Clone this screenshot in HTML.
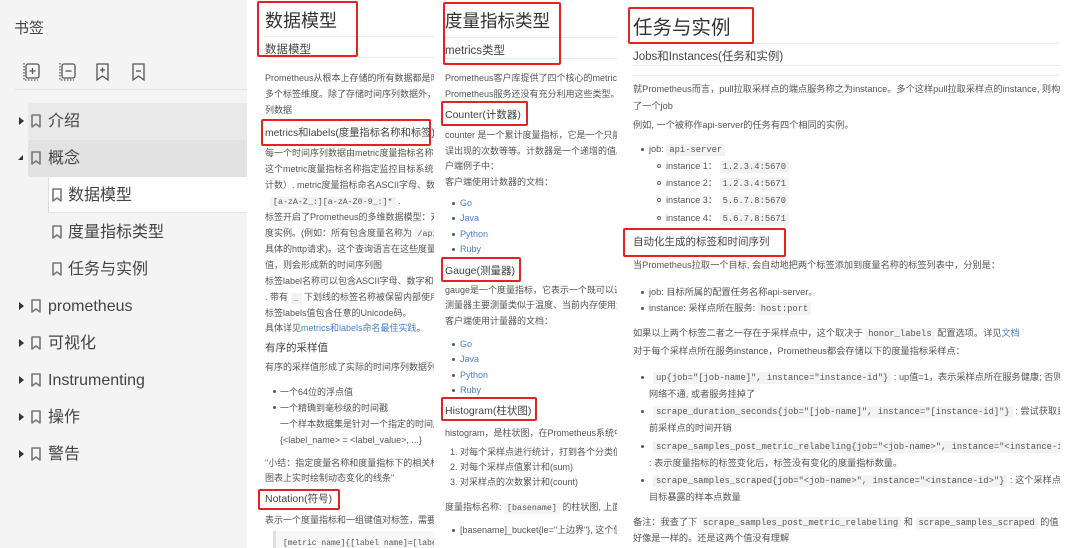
<!DOCTYPE html>
<html><head><meta charset="utf-8"><style>
*{margin:0;padding:0;box-sizing:border-box}
body{width:1080px;height:548px;overflow:hidden;background:#fff;font-family:"Liberation Sans","Noto Sans CJK SC",sans-serif;position:relative;color:#555}
.a{position:absolute;white-space:nowrap}
.sb{position:absolute;left:0;top:0;width:247px;height:548px;background:#f4f4f4}
.it{position:absolute;height:37px;font-size:16px;color:#444;line-height:37px;white-space:nowrap}
.tri{position:absolute;width:0;height:0;border-top:4px solid transparent;border-bottom:4px solid transparent;border-left:5px solid #333}
.bm{position:absolute;width:10px;height:14px}
.p{position:absolute;top:0;height:548px;overflow:hidden}
.t{position:absolute;white-space:nowrap;font-size:9px;line-height:14px;color:#555}
.p3 .t{font-size:9.2px}
.h{position:absolute;white-space:nowrap;color:#444}
.c{font-family:"Liberation Mono",monospace;background:#f3f3f3;padding:1px 3px;color:#555;font-size:8.3px}
.p3 .c{font-size:8.8px}
.l{color:#4a7fd0}
.hr{position:absolute;height:1px;background:#eaeaea}
.rb{position:absolute;border:2px solid #e32222;border-radius:2px}
.d{position:absolute;width:3px;height:3px;border-radius:50%;background:#555}
.o{position:absolute;width:4px;height:4px;border-radius:50%;border:1px solid #666}
</style></head><body>
<svg width="0" height="0" style="position:absolute"><defs><symbol id="bk" viewBox="0 0 10 14"><path d="M1 1h8v12L5 10 1 13z" fill="none" stroke="#777" stroke-width="1.6" stroke-linejoin="round"/></symbol></defs></svg>
<div class="sb"></div>
<div class="a" style="left:14px;top:17px;font-size:15px;color:#444">书签</div>
<svg class="a" style="left:22px;top:61px" width="140" height="22" viewBox="0 0 140 22" fill="none" stroke="#555" stroke-width="1.3">
<rect x="4" y="3" width="13" height="14" rx="2"/><path d="M7.5 10h6M10.5 7v6"/><path d="M2 2v17h14" stroke-dasharray="1.5 1.5"/>
<rect x="40" y="3" width="13" height="14" rx="2"/><path d="M43.5 10h6"/><path d="M38 2v17h14" stroke-dasharray="1.5 1.5"/>
<path d="M75 3h11v16l-5.5-4-5.5 4z"/><path d="M78 9h5M80.5 6.5v5"/>
<path d="M111 3h11v16l-5.5-4-5.5 4z"/><path d="M114 10h5"/>
</svg>
<div class="a" style="left:15px;top:89px;width:232px;height:1px;background:#e2e2e2"></div>
<div class="a" style="left:28px;top:103px;width:219px;height:37px;background:#e9e9e9;border-radius:3px 0 0 3px"></div>
<div class="a" style="left:28px;top:140px;width:219px;height:37px;background:#e2e2e3;border-radius:0 0 0 3px"></div>
<div class="a" style="left:48px;top:177px;width:199px;height:36px;background:#fff;border-left:1px solid #ddd;border-bottom:1px solid #e4e4e4"></div>

<div class="tri" style="left:19px;top:117px"></div><svg class="bm" style="left:31px;top:114px"><use href="#bk"/></svg><div class="it" style="left:48px;top:103px">介绍</div>
<div class="tri" style="left:18px;top:155px;border:0;border-left:5px solid transparent;border-bottom:5px solid #333"></div><svg class="bm" style="left:31px;top:151px"><use href="#bk"/></svg><div class="it" style="left:48px;top:140px">概念</div>
<svg class="bm" style="left:52px;top:188px"><use href="#bk"/></svg><div class="it" style="left:68px;top:177px">数据模型</div>
<svg class="bm" style="left:52px;top:225px"><use href="#bk"/></svg><div class="it" style="left:68px;top:214px">度量指标类型</div>
<svg class="bm" style="left:52px;top:262px"><use href="#bk"/></svg><div class="it" style="left:68px;top:251px">任务与实例</div>
<div class="tri" style="left:19px;top:302px"></div><svg class="bm" style="left:31px;top:299px"><use href="#bk"/></svg><div class="it" style="left:48px;top:288px">prometheus</div>
<div class="tri" style="left:19px;top:339px"></div><svg class="bm" style="left:31px;top:336px"><use href="#bk"/></svg><div class="it" style="left:48px;top:325px">可视化</div>
<div class="tri" style="left:19px;top:376px"></div><svg class="bm" style="left:31px;top:373px"><use href="#bk"/></svg><div class="it" style="left:48px;top:362px">Instrumenting</div>
<div class="tri" style="left:19px;top:413px"></div><svg class="bm" style="left:31px;top:410px"><use href="#bk"/></svg><div class="it" style="left:48px;top:399px">操作</div>
<div class="tri" style="left:19px;top:450px"></div><svg class="bm" style="left:31px;top:447px"><use href="#bk"/></svg><div class="it" style="left:48px;top:436px">警告</div>

<!-- Panel 1 -->
<div class="p" style="left:258px;width:176px">
<div class="h" style="left:7px;top:7px;font-size:18px;color:#333">数据模型</div>
<div class="hr" style="left:7px;top:36px;width:170px"></div>
<div class="h" style="left:7px;top:41px;font-size:11.5px">数据模型</div>
<div class="hr" style="left:7px;top:57px;width:170px"></div>
<div class="t" style="left:7px;top:71px">Prometheus从根本上存储的所有数据都是<span class="l">时间序列</span></div>
<div class="t" style="left:7px;top:87px">多个标签维度。除了存储时间序列数据外，Prometheus</div>
<div class="t" style="left:7px;top:103px">列数据</div>
<div class="h" style="left:7px;top:124px;font-size:10.3px">metrics和labels(度量指标名称和标签)</div>
<div class="t" style="left:7px;top:146px">每一个时间序列数据由metric度量指标名称和它的标签</div>
<div class="t" style="left:7px;top:162px">这个metric度量指标名称指定监控目标系统的测量特征</div>
<div class="t" style="left:7px;top:178px">计数）. metric度量指标命名ASCII字母、数字、下划线</div>
<div class="t" style="left:12px;top:194px"><span class="c">[a-zA-Z_:][a-zA-Z0-9_:]*</span> .</div>
<div class="t" style="left:7px;top:210px">标签开启了Prometheus的多维数据模型：对于相同的</div>
<div class="t" style="left:7px;top:226px">度实例。(例如：所有包含度量名称为 <span class="c">/api/tracks</span></div>
<div class="t" style="left:7px;top:242px">具体的http请求)。这个查询语言在这些度量和标签</div>
<div class="t" style="left:7px;top:258px">值，则会形成新的时间序列图</div>
<div class="t" style="left:7px;top:274px">标签label名称可以包含ASCII字母、数字和下划线</div>
<div class="t" style="left:7px;top:290px">. 带有 <span class="c">_</span> 下划线的标签名称被保留内部使用。</div>
<div class="t" style="left:7px;top:306px">标签labels值包含任意的Unicode码。</div>
<div class="t" style="left:7px;top:321px">具体详见<span class="l">metrics和labels命名最佳实践</span>。</div>
<div class="h" style="left:7px;top:340px;font-size:10.5px">有序的采样值</div>
<div class="t" style="left:7px;top:360px">有序的采样值形成了实际的时间序列数据列表。每个采样值</div>
<div class="d" style="left:15px;top:390px"></div><div class="t" style="left:22px;top:385px">一个64位的浮点值</div>
<div class="d" style="left:15px;top:406px"></div><div class="t" style="left:22px;top:401px">一个精确到毫秒级的时间戳</div>
<div class="t" style="left:22px;top:417px">一个样本数据集是针对一个指定的时间序列在一定时间</div>
<div class="t" style="left:22px;top:433px">{&lt;label_name&gt; = &lt;label_value&gt;, ...}</div>
<div class="t" style="left:7px;top:456px">"小结：指定度量名称和度量指标下的相关标签值，则确定了</div>
<div class="t" style="left:7px;top:471px">图表上实时绘制动态变化的线条"</div>
<div class="h" style="left:7px;top:491px;font-size:10.5px">Notation(符号)</div>
<div class="t" style="left:7px;top:513px">表示一个度量指标和一组键值对标签，需要使用以下符号</div>
<div class="a" style="left:15px;top:531px;width:170px;height:20px;background:#f7f7f7;border-left:3px solid #e0e0e0"></div>
<div class="t" style="left:25px;top:537px;font-family:'Liberation Mono',monospace;font-size:8px">[metric name]{[label name]=[label value],</div>
</div>

<!-- Panel 2 -->
<div class="p" style="left:440px;width:177px">
<div class="h" style="left:5px;top:8px;font-size:17.5px;color:#333">度量指标类型</div>
<div class="hr" style="left:5px;top:37px;width:172px"></div>
<div class="h" style="left:5px;top:42px;font-size:11.5px">metrics类型</div>
<div class="hr" style="left:5px;top:58px;width:172px"></div>
<div class="t" style="left:5px;top:71px">Prometheus客户库提供了四个核心的metrics类型。</div>
<div class="t" style="left:5px;top:87px">Prometheus服务还没有充分利用这些类型。不久的</div>
<div class="h" style="left:5px;top:107px;font-size:10.5px">Counter(计数器)</div>
<div class="t" style="left:5px;top:128px">counter 是一个累计度量指标，它是一个只能递增的数值</div>
<div class="t" style="left:5px;top:144px">误出现的次数等等。计数器是一个递增的值。反例：</div>
<div class="t" style="left:5px;top:159px">户端例子中：</div>
<div class="t" style="left:5px;top:175px">客户端使用计数器的文档：</div>
<div class="d" style="left:12px;top:202px"></div><div class="t" style="left:20px;top:196px;color:#4a7fd0">Go</div>
<div class="d" style="left:12px;top:217px"></div><div class="t" style="left:20px;top:211px;color:#4a7fd0">Java</div>
<div class="d" style="left:12px;top:233px"></div><div class="t" style="left:20px;top:227px;color:#4a7fd0">Python</div>
<div class="d" style="left:12px;top:248px"></div><div class="t" style="left:20px;top:242px;color:#4a7fd0">Ruby</div>
<div class="h" style="left:5px;top:263px;font-size:10.5px">Gauge(测量器)</div>
<div class="t" style="left:5px;top:283px">gauge是一个度量指标，它表示一个既可以递增, 又可以</div>
<div class="t" style="left:5px;top:298px">测量器主要测量类似于温度、当前内存使用量等，也</div>
<div class="t" style="left:5px;top:314px">客户端使用计量器的文档：</div>
<div class="d" style="left:12px;top:343px"></div><div class="t" style="left:20px;top:337px;color:#4a7fd0">Go</div>
<div class="d" style="left:12px;top:358px"></div><div class="t" style="left:20px;top:352px;color:#4a7fd0">Java</div>
<div class="d" style="left:12px;top:374px"></div><div class="t" style="left:20px;top:368px;color:#4a7fd0">Python</div>
<div class="d" style="left:12px;top:389px"></div><div class="t" style="left:20px;top:383px;color:#4a7fd0">Ruby</div>
<div class="h" style="left:5px;top:403px;font-size:10.5px">Histogram(柱状图)</div>
<div class="t" style="left:5px;top:426px">histogram，是柱状图，在Prometheus系统中的查询语言</div>
<div class="t" style="left:10px;top:445px">1. 对每个采样点进行统计，打到各个分类值中(bucket)</div>
<div class="t" style="left:10px;top:460px">2. 对每个采样点值累计和(sum)</div>
<div class="t" style="left:10px;top:475px">3. 对采样点的次数累计和(count)</div>
<div class="t" style="left:5px;top:500px">度量指标名称: <span class="c">[basename]</span> 的柱状图, 上面三类</div>
<div class="d" style="left:12px;top:529px"></div><div class="t" style="left:20px;top:523px">[basename]_bucket{le="上边界"}, 这个值为小于等于</div>
</div>

<!-- Panel 3 -->
<div class="p p3" style="left:620px;width:440px">
<div class="h" style="left:13px;top:11px;font-size:19.5px;color:#333">任务与实例</div>
<div class="hr" style="left:13px;top:43px;width:427px"></div>
<div class="h" style="left:13px;top:48px;font-size:11.5px">Jobs和Instances(任务和实例)</div>
<div class="hr" style="left:13px;top:65px;width:427px"></div>
<div class="hr" style="left:13px;top:75px;width:427px"></div>
<div class="t" style="left:13px;top:82px">就Prometheus而言，pull拉取采样点的端点服务称之为instance。多个这样pull拉取采样点的instance, 则构成</div>
<div class="t" style="left:13px;top:99px">了一个job</div>
<div class="t" style="left:13px;top:118px">例如, 一个被称作api-server的任务有四个相同的实例。</div>
<div class="d" style="left:21px;top:148px"></div><div class="t" style="left:29px;top:142px">job: <span class="c">api-server</span></div>
<div class="o" style="left:37px;top:164px"></div><div class="t" style="left:46px;top:159px">instance 1： <span class="c">1.2.3.4:5670</span></div>
<div class="o" style="left:37px;top:181px"></div><div class="t" style="left:46px;top:176px">instance 2： <span class="c">1.2.3.4:5671</span></div>
<div class="o" style="left:37px;top:198px"></div><div class="t" style="left:46px;top:193px">instance 3： <span class="c">5.6.7.8:5670</span></div>
<div class="o" style="left:37px;top:216px"></div><div class="t" style="left:46px;top:211px">instance 4： <span class="c">5.6.7.8:5671</span></div>
<div class="h" style="left:13px;top:234px;font-size:10.5px">自动化生成的标签和时间序列</div>
<div class="t" style="left:13px;top:258px">当Prometheus拉取一个目标, 会自动地把两个标签添加到度量名称的标签列表中，分别是：</div>
<div class="d" style="left:21px;top:291px"></div><div class="t" style="left:29px;top:285px">job: 目标所属的配置任务名称api-server。</div>
<div class="d" style="left:21px;top:307px"></div><div class="t" style="left:29px;top:301px">instance: 采样点所在服务: <span class="c">host:port</span></div>
<div class="t" style="left:13px;top:326px">如果以上两个标签二者之一存在于采样点中，这个取决于 <span class="c">honor_labels</span> 配置选项。详见<span class="l">文档</span></div>
<div class="t" style="left:13px;top:344px">对于每个采样点所在服务instance，Prometheus都会存储以下的度量指标采样点：</div>
<div class="d" style="left:21px;top:376px"></div><div class="t" style="left:33px;top:370px"><span class="c">up{job="[job-name]", instance="instance-id"}</span> : up值=1，表示采样点所在服务健康; 否则，</div>
<div class="t" style="left:29px;top:387px">网络不通, 或者服务挂掉了</div>
<div class="d" style="left:21px;top:410px"></div><div class="t" style="left:33px;top:404px"><span class="c">scrape_duration_seconds{job="[job-name]", instance="[instance-id]"}</span> : 尝试获取目</div>
<div class="t" style="left:29px;top:421px">前采样点的时间开销</div>
<div class="d" style="left:21px;top:445px"></div><div class="t" style="left:33px;top:439px"><span class="c">scrape_samples_post_metric_relabeling{job="&lt;job-name&gt;", instance="&lt;instance-id&gt;"}</span></div>
<div class="t" style="left:29px;top:456px">: 表示度量指标的标签变化后，标签没有变化的度量指标数量。</div>
<div class="d" style="left:21px;top:479px"></div><div class="t" style="left:33px;top:473px"><span class="c">scrape_samples_scraped{job="&lt;job-name&gt;", instance="&lt;instance-id&gt;"}</span> : 这个采样点</div>
<div class="t" style="left:29px;top:490px">目标暴露的样本点数量</div>
<div class="t" style="left:13px;top:515px">备注：我查了下 <span class="c">scrape_samples_post_metric_relabeling</span> 和 <span class="c">scrape_samples_scraped</span> 的值</div>
<div class="t" style="left:13px;top:531px">好像是一样的。还是这两个值没有理解</div>
</div>

<!-- red boxes -->
<div class="rb" style="left:257px;top:1px;width:101px;height:56px"></div>
<div class="rb" style="left:261px;top:119px;width:170px;height:27px"></div>
<div class="rb" style="left:258px;top:489px;width:82px;height:21px"></div>
<div class="rb" style="left:443px;top:2px;width:118px;height:63px"></div>
<div class="rb" style="left:441px;top:101px;width:87px;height:25px"></div>
<div class="rb" style="left:441px;top:257px;width:80px;height:25px"></div>
<div class="rb" style="left:441px;top:397px;width:96px;height:24px"></div>
<div class="rb" style="left:628px;top:7px;width:126px;height:37px"></div>
<div class="rb" style="left:623px;top:228px;width:163px;height:29px"></div>
</body></html>
